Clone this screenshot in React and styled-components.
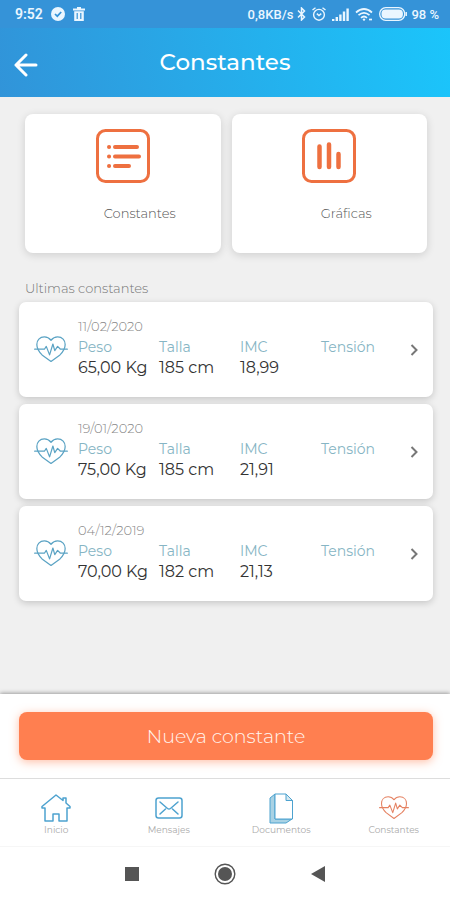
import React from 'react';
import styled, { createGlobalStyle } from 'styled-components';

const measures = [
  { date: '11/02/2020', peso: '65,00 Kg', talla: '185 cm', imc: '18,99' },
  { date: '19/01/2020', peso: '75,00 Kg', talla: '185 cm', imc: '21,91' },
  { date: '04/12/2019', peso: '70,00 Kg', talla: '182 cm', imc: '21,13' },
];

const HeartPulse = ({ width }) => (
  <svg width={width} viewBox="0 0 36 28" fill="none" stroke="currentColor" strokeWidth="1.300" strokeLinecap="round" strokeLinejoin="round">
    <path d="M18 4.500C16 2 13.500 1 11 1C6 1 3 4.500 3 9C3 13 5 16.500 8.500 20L18 27L27.500 20C31 16.500 33 13 33 9C33 4.500 30 1 25 1C22.500 1 20 2 18 4.500Z" />
    <path d="M.7 14H11L13 11L16.500 20L20 8.500L22 15.500L25 11L28 14H35.300" />
  </svg>
);

const BackIcon = () => (
  <svg width="24" height="24" viewBox="0 0 24 24" fill="none" stroke="currentColor" strokeWidth="3" strokeLinecap="round" strokeLinejoin="round">
    <path d="M22 12H2M12 2L2 12L12 22" />
  </svg>
);

const ListIcon = () => (
  <svg width="54" height="54" viewBox="0 0 54 54" fill="none" stroke="currentColor" strokeLinecap="round">
    <rect x="1.500" y="1.500" width="51" height="51" rx="8" strokeWidth="3" />
    <path d="M19 18H41M19 27.500H43M19 37H33" strokeWidth="4" />
    <path d="M13 18H13.100M13 27.500H13.100M13 37H13.100" strokeWidth="4" />
  </svg>
);

const BarsIcon = () => (
  <svg width="54" height="54" viewBox="0 0 54 54" fill="none" stroke="currentColor" strokeLinecap="round">
    <rect x="1.500" y="1.500" width="51" height="51" rx="8" strokeWidth="3" />
    <path d="M17.500 17.500V38M27 15.500V38M36.500 25V38" strokeWidth="4.500" />
  </svg>
);

const HomeIcon = () => (
  <svg width="30" height="28" viewBox="0 0 30 28" fill="none" stroke="currentColor" strokeWidth="1.500" strokeLinejoin="round">
    <path d="M15 1L1 12.500V14H4V27H12V20H18V27H26V14H29V12.500L25 9V4H22V6.500Z" />
  </svg>
);

const MailIcon = () => (
  <svg width="28" height="22" viewBox="0 0 28 22" fill="none" stroke="currentColor" strokeWidth="1.500" strokeLinecap="round">
    <rect x="1" y="1" width="26" height="20" rx="2.500" />
    <path d="M5 5L12.500 11.500Q14 12.500 15.500 11.500L23 5M5 17L10.500 12M23 17L17.500 12" />
  </svg>
);

const DocsIcon = () => (
  <svg width="25" height="31" viewBox="0 0 25 31" fill="none" stroke="currentColor" strokeLinejoin="round">
    <path d="M6 1L1 5V30H17L23 26H6Z" fill="#a9d2e4" />
    <path d="M6 1H17L23.500 7.500V26H6Z" fill="#fff" />
    <path d="M17 1V7.500H23.500Z" fill="#d3e8f1" />
  </svg>
);

const CheckBadge = () => (
  <svg width="14" height="14" viewBox="0 0 14 14">
    <circle cx="7" cy="7" r="7" fill="currentColor" />
    <path d="M4 7L6.300 9.200L10.200 5" fill="none" stroke="#3593d8" strokeWidth="1.700" />
  </svg>
);

const TrashIcon = () => (
  <svg width="12" height="14" viewBox="0 0 12 14" fill="currentColor">
    <path fillRule="evenodd" d="M4 0H8V1.500H12V3.500H0V1.500H4ZM1.200 4.200H10.800V14H1.200ZM3.600 6V12H4.800V6ZM7.200 6V12H8.400V6Z" />
  </svg>
);

const BluetoothIcon = () => (
  <svg width="9" height="14" viewBox="0 0 9 14" fill="none" stroke="currentColor" strokeWidth="1.500">
    <path d="M1 3.500L7.500 10L4.500 13V1L7.500 4L1 10.500" />
  </svg>
);

const AlarmIcon = () => (
  <svg width="14" height="14" viewBox="0 0 14 14" fill="none" stroke="currentColor" strokeWidth="1.400">
    <circle cx="7" cy="7.800" r="5.400" />
    <path d="M.5 3L3.500.7M13.500 3L10.500.7M4.800 6.600L7 8.500L9.300 6.600" />
  </svg>
);

const SignalIcon = () => (
  <svg width="17" height="13" viewBox="0 0 17 13" fill="currentColor">
    <path d="M0 11H2.400V13H0ZM3.600 9H6V13H3.600ZM7.200 6.500H9.600V13H7.200ZM10.800 3.500H13.200V13H10.800ZM14.400.5H16.800V13H14.400Z" />
  </svg>
);

const WifiIcon = () => (
  <svg width="18" height="13" viewBox="0 0 18 13" fill="none" stroke="currentColor" strokeWidth="1.700">
    <path d="M1 4.500Q9-2.500 17 4.500M3.500 7.200Q9 2.500 14.500 7.200M6 9.800Q9 7.200 12 9.800" />
    <circle cx="9" cy="11.600" r="1.200" fill="currentColor" stroke="none" />
    <path d="M14 11.500H17" />
  </svg>
);

const BatteryIcon = () => (
  <svg width="28" height="14" viewBox="0 0 28 14">
    <rect x=".7" y=".7" width="25" height="12.600" rx="6" fill="none" stroke="currentColor" strokeWidth="1.300" />
    <rect x="2.500" y="2.500" width="21.400" height="9" rx="4" fill="currentColor" />
    <path d="M27.200 5V9" stroke="currentColor" strokeWidth="1.500" />
  </svg>
);

const tabs = [
  { label: 'Inicio', icon: <HomeIcon /> },
  { label: 'Mensajes', icon: <MailIcon /> },
  { label: 'Documentos', icon: <DocsIcon /> },
  { label: 'Constantes', icon: <HeartPulse width={30} />, active: true },
];

export default function App() {
  return (
    <Screen>
      <GlobalStyle />
      <StatusBar>
        <Clock>9:52</Clock>
        <CheckBadge />
        <TrashIcon />
        <StatusRight>
          <span>0,8KB/s</span>
          <StatusIcons>
            <BluetoothIcon />
            <AlarmIcon />
            <SignalIcon />
            <WifiIcon />
            <BatteryIcon />
          </StatusIcons>
          <span>98 %</span>
        </StatusRight>
      </StatusBar>

      <Header>
        <BackButton aria-label="Volver">
          <BackIcon />
        </BackButton>
        <Title>Constantes</Title>
      </Header>

      <Main>
        <Tiles>
          <Tile>
            <ListIcon />
            <TileLabel>Constantes</TileLabel>
          </Tile>
          <Tile>
            <BarsIcon />
            <TileLabel>Gráficas</TileLabel>
          </Tile>
        </Tiles>

        <SectionTitle>Ultimas constantes</SectionTitle>
        <List>
          {measures.map(item => (
            <li key={item.date}>
              <Measure>
                <HeartPulse width={34} />
                <Details>
                  <DateText>{item.date}</DateText>
                  <Values>
                    <Field label="Peso" value={item.peso} />
                    <Field label="Talla" value={item.talla} />
                    <Field label="IMC" value={item.imc} />
                    <Field label="Tensión" />
                  </Values>
                </Details>
                <Chevron width="8" height="12" viewBox="0 0 8 12">
                  <path d="M1.500 1L6.500 6L1.500 11" />
                </Chevron>
              </Measure>
            </li>
          ))}
        </List>
      </Main>

      <Action>
        <NewButton>Nueva constante</NewButton>
      </Action>

      <TabBar>
        {tabs.map(tab => (
          <Tab key={tab.label} href="#" $active={tab.active}>
            <TabIcon>{tab.icon}</TabIcon>
            {tab.label}
          </Tab>
        ))}
      </TabBar>

      <SystemBar>
        <SystemButton aria-label="Recientes">
          <svg width="14" height="14" viewBox="0 0 14 14">
            <rect width="14" height="14" fill="#555" />
          </svg>
        </SystemButton>
        <SystemButton aria-label="Pantalla de inicio">
          <svg width="22" height="22" viewBox="0 0 22 22">
            <circle cx="11" cy="11" r="9.800" fill="none" stroke="#555" strokeWidth="1.400" />
            <circle cx="11" cy="11" r="7" fill="#555" />
          </svg>
        </SystemButton>
        <SystemButton aria-label="Atrás">
          <svg width="14" height="16" viewBox="0 0 14 16">
            <path d="M14 0V16L0 8Z" fill="#555" />
          </svg>
        </SystemButton>
      </SystemBar>
    </Screen>
  );
}

const Field = ({ label, value }) => (
  <Cell>
    <FieldLabel>{label}</FieldLabel>
    <FieldValue>{value}</FieldValue>
  </Cell>
);

const GlobalStyle = createGlobalStyle`
  * {
    box-sizing: border-box;
  }

  body {
    margin: 0;
    font-family: Montserrat, Inter, "Open Sans", sans-serif;
  }

  button {
    border: none;
    padding: 0;
    background: none;
    font-family: inherit;
    cursor: pointer;
  }

  svg {
    flex-shrink: 0;
  }
  `;

const Screen = styled.div`
  display: flex;
  flex-direction: column;
  min-height: 100vh;
  background: #f0f0f0;
  `;

const StatusBar = styled.div`
  display: flex;
  align-items: center;
  gap: 8px;
  height: 28px;
  padding: 0 11px 0 15px;
  background: #3593d8;
  color: #eaf6ff;
  font-family: Roboto, sans-serif;
  font-size: 13px;
  font-weight: 500;
  `;

const Clock = styled.span`
  font-size: 14px;
  font-weight: 600;
  `;

const StatusRight = styled.div`
  display: flex;
  align-items: center;
  gap: 4px;
  margin-left: auto;
  `;

const StatusIcons = styled.div`
  display: flex;
  align-items: center;
  gap: 6px;
  `;

const Header = styled.header`
  display: grid;
  grid-template-columns: 52px 1fr 52px;
  align-items: center;
  height: 69px;
  padding-bottom: 2px;
  background: linear-gradient(80deg, #3194d9, #1bc5fb);
  color: #fff;
  `;

const BackButton = styled.button`
  display: flex;
  padding: 6px 0 0 14px;
  color: #fff;
  `;

const Title = styled.h1`
  margin: 0;
  font-size: 23px;
  font-weight: 500;
  line-height: 28px;
  text-align: center;
  `;

const Main = styled.main`
  flex: 1;
  padding: 17px 17px 24px 19px;
  `;

const Tiles = styled.div`
  display: grid;
  grid-template-columns: 1fr 1fr;
  gap: 11px;
  padding: 0 6px;
  `;

const Tile = styled.button`
  display: flex;
  flex-direction: column;
  align-items: center;
  gap: 20px;
  height: 139px;
  padding-top: 15px;
  border-radius: 8px;
  background: #fff;
  box-shadow: 0 2px 8px rgba(0, 0, 0, 0.14);
  color: #ee7040;
  `;

const TileLabel = styled.span`
  padding-left: 34px;
  color: #555;
  font-size: 13px;
  font-weight: 300;
  line-height: 20px;
  `;

const SectionTitle = styled.h2`
  margin: 25px 6px 4px;
  color: #777;
  font-size: 13px;
  font-weight: 300;
  line-height: 20px;
  `;

const List = styled.ul`
  display: flex;
  flex-direction: column;
  gap: 7px;
  margin: 0;
  padding: 0;
  list-style: none;
  `;

const Measure = styled.button`
  display: flex;
  align-items: center;
  width: 100%;
  height: 95px;
  padding: 0 15px;
  border-radius: 7px;
  background: #fff;
  box-shadow: 0 2px 7px rgba(0, 0, 0, 0.18);
  color: #5ba3c4;
  text-align: left;
  `;

const Details = styled.span`
  flex: 1;
  margin: 0 8px 0 10px;
  padding-bottom: 6px;
  `;

const DateText = styled.span`
  display: block;
  color: #888;
  font-size: 13px;
  font-weight: 300;
  line-height: 20px;
  `;

const Values = styled.span`
  display: grid;
  grid-template-columns: repeat(4, 1fr);
  `;

const Cell = styled.span`
  display: flex;
  flex-direction: column;
  white-space: nowrap;
  `;

const FieldLabel = styled.span`
  color: #86b5c4;
  font-size: 14px;
  line-height: 22px;
  `;

const FieldValue = styled.span`
  min-height: 20px;
  color: #333;
  font-size: 16px;
  line-height: 20px;
  `;

const Chevron = styled.svg`
  fill: none;
  stroke: #777;
  stroke-width: 2;
  `;

const Action = styled.div`
  padding: 18px 17px 18px 19px;
  background: #fff;
  box-shadow: 0 -1px 4px rgba(0, 0, 0, 0.35);
  `;

const NewButton = styled.button`
  display: block;
  width: 100%;
  height: 48px;
  border-radius: 8px;
  background: #ff7f50;
  box-shadow: 0 2px 10px rgba(255, 127, 80, 0.5);
  color: #fff5ef;
  font-size: 19px;
  font-weight: 300;
  `;

const TabBar = styled.nav`
  display: grid;
  grid-template-columns: repeat(4, 1fr);
  height: 69px;
  border-top: 1px solid #ddd;
  border-bottom: 1px solid #f6f6f6;
  background: #fff;
  `;

const Tab = styled.a`
  display: flex;
  flex-direction: column;
  align-items: center;
  padding-top: 13px;
  color: #aaa;
  font-size: 9px;
  line-height: 12px;
  text-decoration: none;

  svg {
    color: ${props => (props.$active ? '#e58262' : '#4da2cf')};
  }
  `;

const TabIcon = styled.span`
  display: flex;
  align-items: center;
  height: 32px;
  `;

const SystemBar = styled.div`
  display: flex;
  justify-content: center;
  align-items: center;
  gap: 61px;
  height: 53px;
  background: #fff;
  `;

const SystemButton = styled.button`
  display: flex;
  justify-content: center;
  align-items: center;
  width: 32px;
  height: 32px;
  `;
